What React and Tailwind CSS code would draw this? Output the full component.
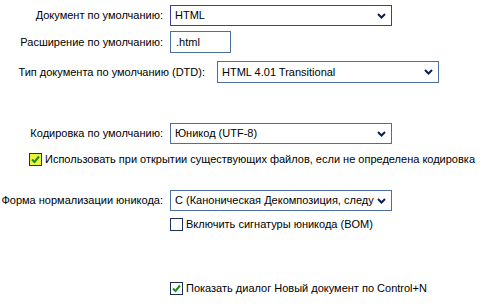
import React from "react";

const font = { fontFamily: '"Liberation Sans", Arial, sans-serif' };

function Chevron() {
  return (
    <svg width="9" height="6" viewBox="0 0 9 6" className="shrink-0">
      <path d="M1 1 L4.5 4.5 L8 1" fill="none" stroke="#0d1f4f" strokeWidth="2" />
    </svg>
  );
}

function Select({ value, w, focus }) {
  return (
    <div
      className={`flex h-full items-center justify-between border bg-white pl-[4px] pr-[5px] ${focus ? "border-[#3b3f9a]" : "border-[#4d6f9e]"}`}
      style={{ width: w }}
    >
      <span className="overflow-hidden whitespace-nowrap text-[11px] text-black">{value}</span>
      <Chevron />
    </div>
  );
}

function Check({ checked, yellow }) {
  return (
    <div
      className={`flex h-[13px] w-[13px] shrink-0 items-center justify-center border border-[#1c3060] ${yellow ? "bg-[#eef23a]" : "bg-white"}`}
    >
      {checked && (
        <svg width="9" height="9" viewBox="0 0 9 9">
          <path d="M1 4.5 L3.5 7 L8 1.5" fill="none" stroke="#1f8a1f" strokeWidth="2" />
        </svg>
      )}
    </div>
  );
}

export default function App() {
  return (
    <div className="h-[307px] w-[485px] overflow-hidden bg-white text-[11px] text-black" style={font}>
      <div className="flex flex-col pt-[5px]">
        <div className="flex h-[21px] items-center">
          <div className="w-[163px] whitespace-nowrap text-right">Документ по умолчанию:</div>
          <div className="ml-[7px] h-full">
            <Select value="HTML" w={222} focus />
          </div>
        </div>
        <div className="mt-[5px] flex h-[22px] items-center">
          <div className="w-[163px] whitespace-nowrap text-right">Расширение по умолчанию:</div>
          <div className="ml-[7px] flex h-full w-[61px] items-center border border-[#4d6f9e] pl-[5px]">.html</div>
        </div>
        <div className="mt-[8px] flex h-[22px] items-center">
          <div className="w-[205px] whitespace-nowrap text-right">Тип документа по умолчанию (DTD):</div>
          <div className="ml-[12px] h-full">
            <Select value="HTML 4.01 Transitional" w={222} />
          </div>
        </div>
        <div className="mt-[40px] flex h-[21px] items-center">
          <div className="w-[163px] whitespace-nowrap text-right">Кодировка по умолчанию:</div>
          <div className="ml-[7px] h-full">
            <Select value="Юникод (UTF-8)" w={222} />
          </div>
        </div>
        <div className="mt-[9px] flex h-[13px] items-center pl-[29px]">
          <Check checked yellow />
          <span className="ml-[3px] whitespace-nowrap">Использовать при открытии существующих файлов, если не определена кодировка</span>
        </div>
        <div className="mt-[24px] flex h-[21px] items-center">
          <div className="w-[163px] whitespace-nowrap text-right">Форма нормализации юникода:</div>
          <div className="ml-[7px] h-full">
            <Select value="C (Каноническая Декомпозиция, следу" w={222} />
          </div>
        </div>
        <div className="mt-[7px] flex h-[13px] items-center pl-[170px]">
          <Check />
          <span className="ml-[3px] whitespace-nowrap">Включить сигнатуры юникода (BOM)</span>
        </div>
        <div className="mt-[51px] flex h-[13px] items-center pl-[170px]">
          <Check checked />
          <span className="ml-[3px] whitespace-nowrap">Показать диалог Новый документ по Control+N</span>
        </div>
      </div>
    </div>
  );
}
